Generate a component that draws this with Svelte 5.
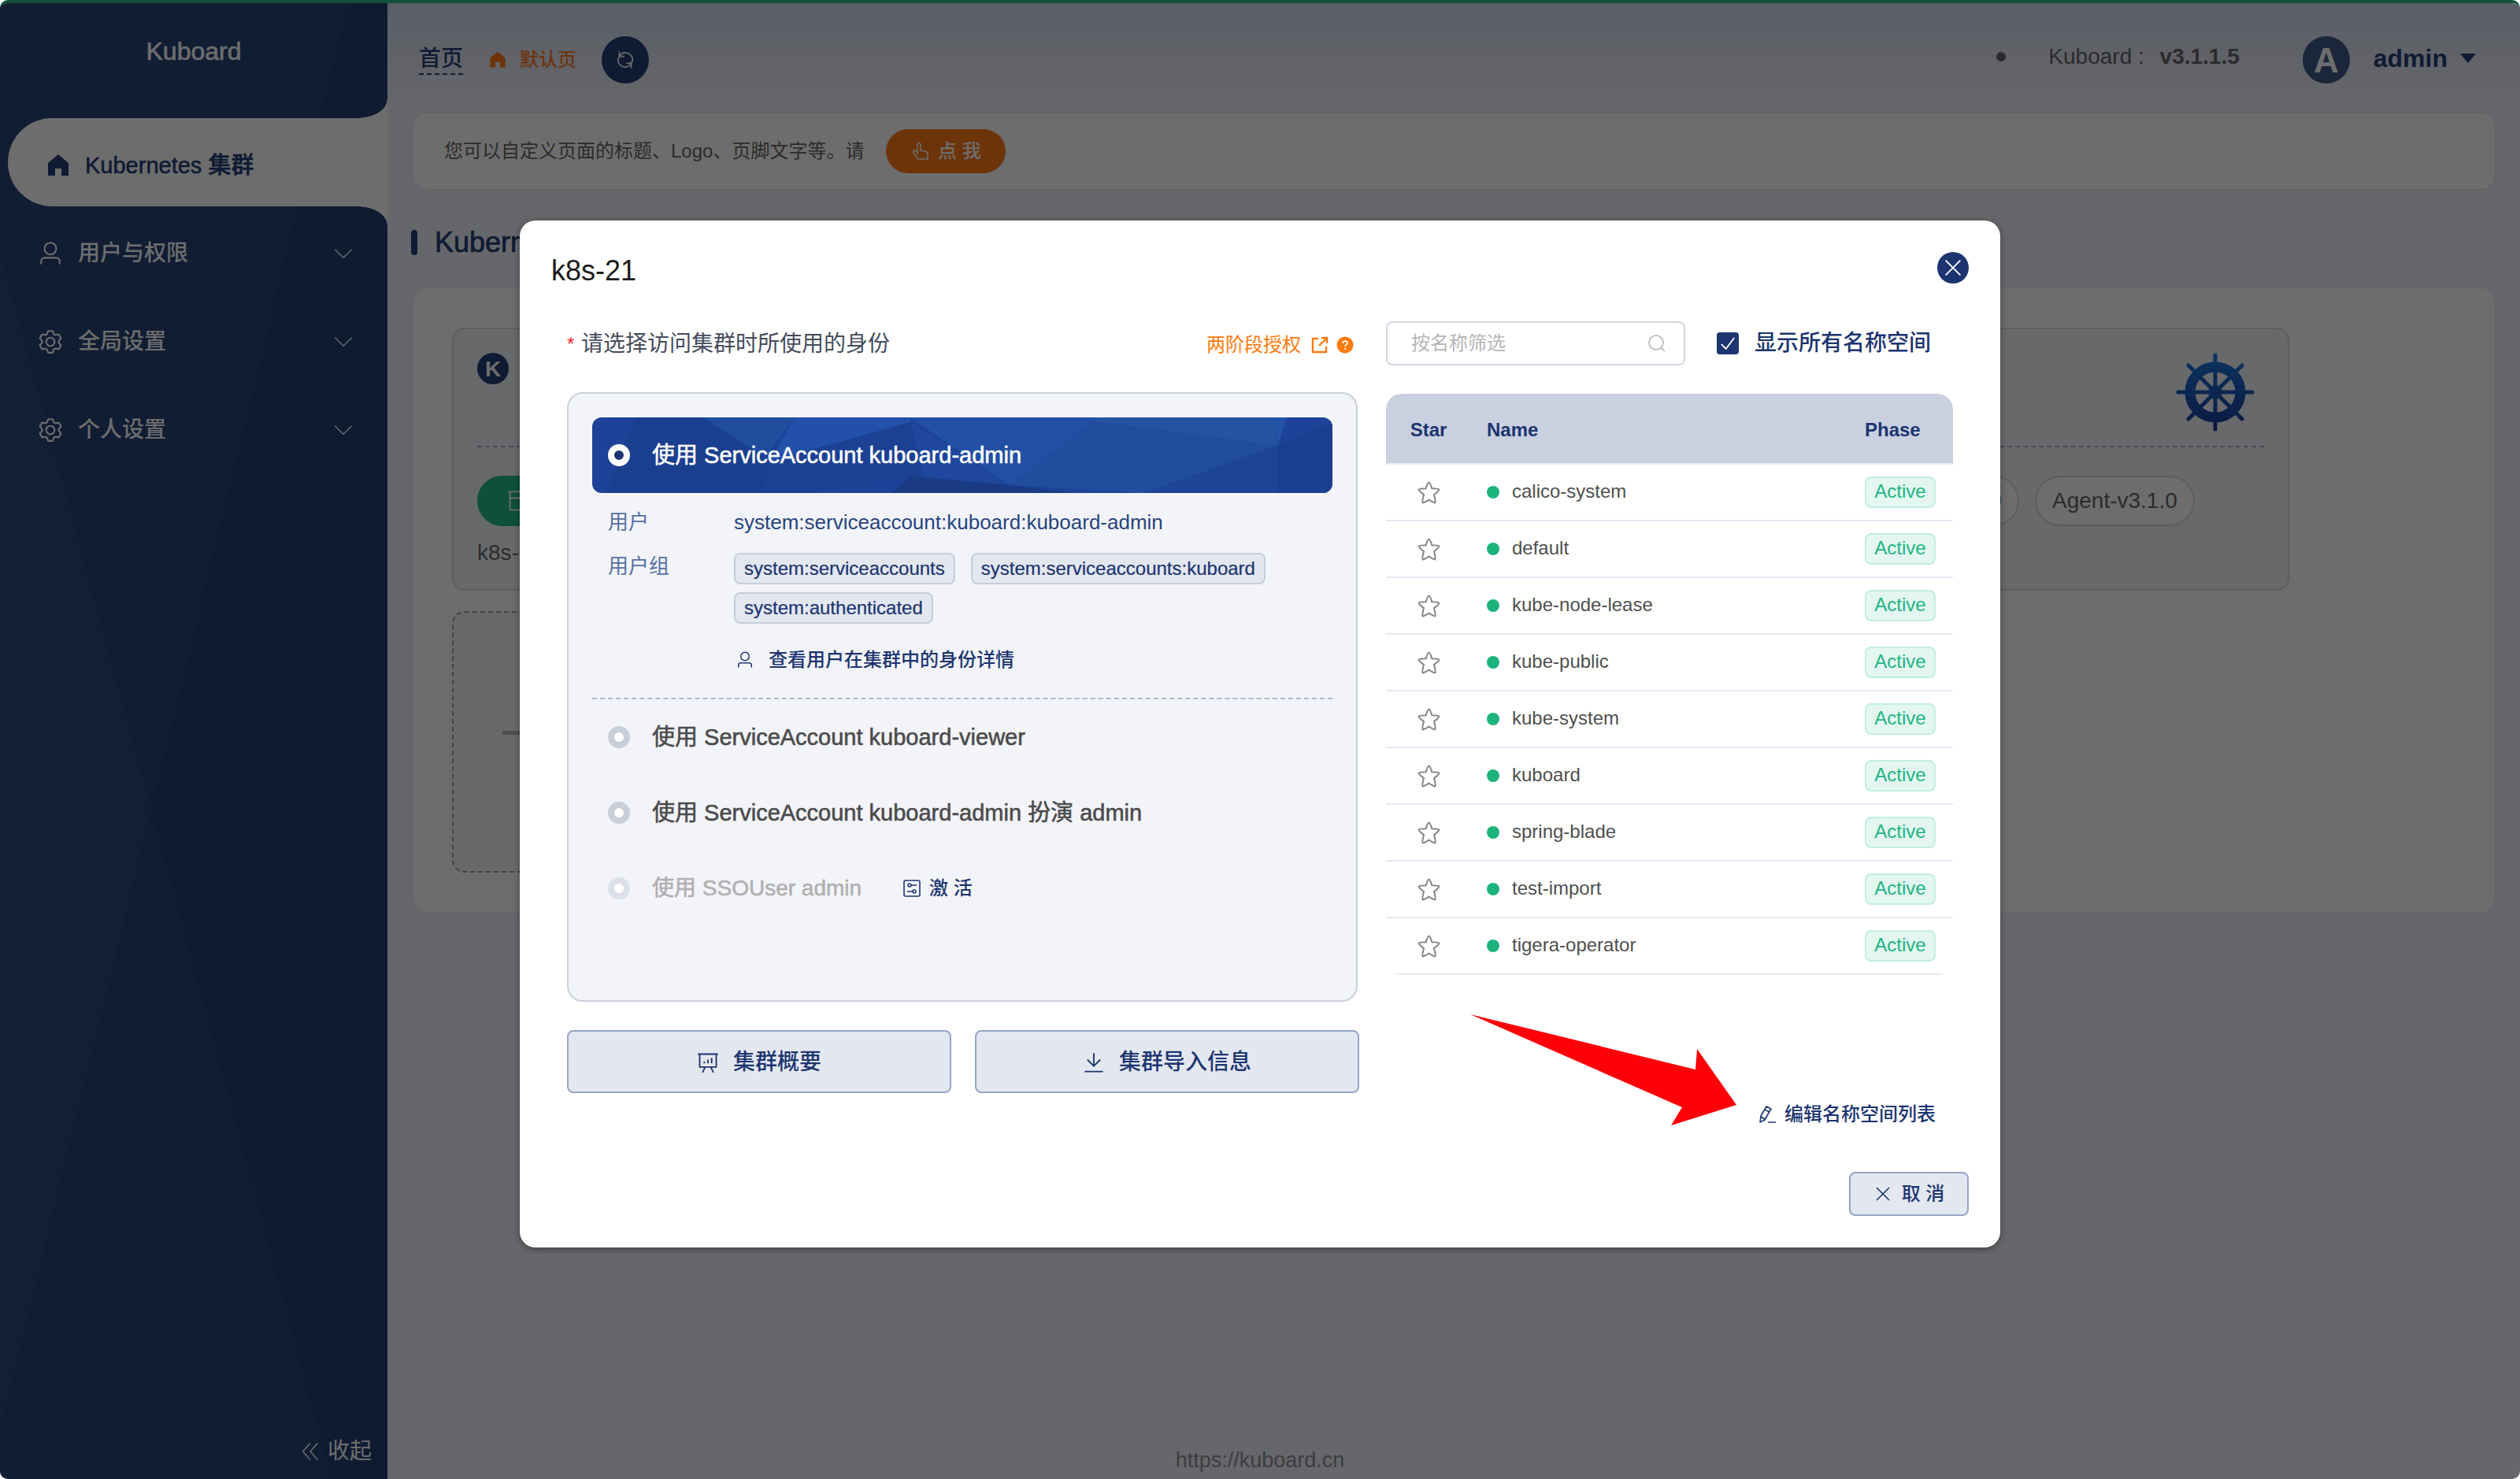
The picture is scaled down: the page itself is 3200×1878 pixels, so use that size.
<script lang="ts">
  const menu = [
    { label: '用户与权限', icon: 'user' },
    { label: '全局设置', icon: 'setting' },
    { label: '个人设置', icon: 'setting' }
  ];
  const groups = ['system:serviceaccounts', 'system:serviceaccounts:kuboard', 'system:authenticated'];
  const namespaces = [
    'calico-system', 'default', 'kube-node-lease', 'kube-public', 'kube-system',
    'kuboard', 'spring-blade', 'test-import', 'tigera-operator'
  ];
  const clusters = [
    { name: 'k8s-21', versions: [] },
    { name: '', versions: [] },
    { name: '', versions: ['1.21.0', 'Agent-v3.1.0'] }
  ];
  let identity = $state('admin');
  let showAll = $state(true);
  let filter = $state('');
  const shown = $derived(namespaces.filter((n) => n.includes(filter)));
</script>

{#snippet icon(name: string)}
  {#if name === 'user'}
    <svg class="icon" viewBox="0 0 1024 1024" aria-hidden="true"><path d="M512 512a192 192 0 1 0 0-384 192 192 0 0 0 0 384zm0 64a256 256 0 1 1 0-512 256 256 0 0 1 0 512zm320 320v-96a96 96 0 0 0-96-96H288a96 96 0 0 0-96 96v96a32 32 0 1 1-64 0v-96a160 160 0 0 1 160-160h448a160 160 0 0 1 160 160v96a32 32 0 1 1-64 0z" /></svg>
  {:else if name === 'setting'}
    <svg class="icon" viewBox="0 0 1024 1024" aria-hidden="true"><path d="M600.704 64a32 32 0 0 1 30.464 22.208l35.2 109.376c14.784 7.232 28.928 15.36 42.432 24.512l112.384-24.192a32 32 0 0 1 34.432 15.36L944.32 364.8a32 32 0 0 1-4.032 37.504l-77.12 85.12a357.12 357.12 0 0 1 0 49.024l77.12 85.248a32 32 0 0 1 4.032 37.504l-88.704 153.6a32 32 0 0 1-34.432 15.296L708.8 803.904c-13.44 9.088-27.648 17.28-42.368 24.512l-35.264 109.376A32 32 0 0 1 600.704 960H423.296a32 32 0 0 1-30.464-22.208L357.696 828.48a351.616 351.616 0 0 1-42.56-24.64l-112.32 24.256a32 32 0 0 1-34.432-15.36L79.68 659.2a32 32 0 0 1 4.032-37.504l77.12-85.248a357.12 357.12 0 0 1 0-48.896l-77.12-85.248A32 32 0 0 1 79.68 364.8l88.704-153.6a32 32 0 0 1 34.432-15.296l112.32 24.256c13.568-9.152 27.776-17.408 42.56-24.64l35.2-109.312A32 32 0 0 1 423.232 64H600.64zm-23.424 64H446.72l-36.352 113.088-24.512 11.968a294.113 294.113 0 0 0-34.816 20.096l-22.656 15.36-116.224-25.088-65.28 113.152 79.68 88.192-1.92 27.136a293.12 293.12 0 0 0 0 40.192l1.92 27.136-79.808 88.192 65.344 113.152 116.224-25.024 22.656 15.296a294.113 294.113 0 0 0 34.816 20.096l24.512 11.968L446.72 896h130.688l36.48-113.152 24.448-11.904a288.282 288.282 0 0 0 34.752-20.096l22.592-15.296 116.288 25.024 65.28-113.152-79.744-88.192 1.92-27.136a293.12 293.12 0 0 0 0-40.256l-1.92-27.136 79.808-88.128-65.344-113.152-116.288 24.96-22.592-15.232a287.616 287.616 0 0 0-34.752-20.096l-24.448-11.904L577.344 128zM512 320a192 192 0 1 1 0 384 192 192 0 0 1 0-384zm0 64a128 128 0 1 0 0 256 128 128 0 0 0 0-256z" /></svg>
  {:else if name === 'home'}
    <svg class="icon" viewBox="0 0 1024 1024" aria-hidden="true"><path d="M512 64 96 416v512h288V640h256v288h288V416z" /></svg>
  {:else if name === 'question'}
    <svg class="icon" viewBox="0 0 1024 1024" aria-hidden="true"><path d="M512 64a448 448 0 1 1 0 896 448 448 0 0 1 0-896z" /><path class="cut" d="M392 420c0-72 50-118 120-118s122 44 122 112c0 92-122 92-122 178" /><circle class="cut-dot" cx="512" cy="716" r="48" /></svg>
  {:else}
    <svg class="icon line" viewBox="0 0 24 24" aria-hidden="true">
      {#if name === 'down'}<path d="M4 8l8 8 8-8" />
      {:else if name === 'collapse'}<path d="M12 3L4 12l8 9M20 3l-8 9 8 9" />
      {:else if name === 'close'}<path d="M4 4l16 16M20 4L4 20" />
      {:else if name === 'check'}<path d="M5 13l5 5L19 6" />
      {:else if name === 'search'}<path d="M11 2a9 9 0 1 0 0 18 9 9 0 0 0 0-18zM18 18l4 4" />
      {:else if name === 'refresh'}<path d="M5 2v6h6M5 8c3-5 9-6 13-2 3 3 3 7 1 10M19 22v-6h-6M19 16c-3 5-9 6-13 2-3-3-3-7-1-10" />
      {:else if name === 'pointer'}<path d="M8 15V4a2 2 0 0 1 4 0v7l6 1q3 1 3 4v6H9l-6-8q-1-2 1-3t4 4z" />
      {:else if name === 'link'}<path d="M10 4H3v17h17v-7M14 3h7v7M21 3L11 13" />
      {:else if name === 'board'}<path d="M1 3h22M3 3v14h18V3M9 17l-3 6M15 17l3 6M8 13v-2M12 13V9M16 13V7" />
      {:else if name === 'download'}<path d="M12 2v14M5 9l7 7 7-7M2 22h20" />
      {:else if name === 'pen'}<path d="M11 2l6 3-8 14-6 3 1-8zM9 6l6 3M4 15l5 3M13 22h10" />
      {:else if name === 'operation'}<path d="M4 2h16a2 2 0 0 1 2 2v16a2 2 0 0 1-2 2H4a2 2 0 0 1-2-2V4a2 2 0 0 1 2-2zM11 8h7M6 16h7" /><circle cx="9" cy="8" r="2" /><circle cx="15" cy="16" r="2" />
      {:else if name === 'star'}<path d="M12 2q1 0 3 6q6 0 7 1q0 1-5 5q2 7 1 8q-1 0-6-3q-5 3-6 3q-1-1 1-8q-5-4-5-5q1-1 7-1q2-6 3-6z" />
      {:else if name === 'box'}<path d="M1 2h22M3 2v18q0 2 2 2h14q2 0 2-2V2M3 9h18" />
      {/if}
    </svg>
  {/if}
{/snippet}

<div class="page">
  <aside class="sidebar">
    <svg class="facets" viewBox="0 0 492 1878" preserveAspectRatio="none" aria-hidden="true">
      <polygon class="f-left" points="0,316 192,1026 0,1815" />
      <polygon class="f-right" points="441,0 492,0 492,1878 421,1878 192,1026" />
    </svg>
    <div class="brand">Kuboard</div>
    <nav class="menu">
      <a class="item active" href="#clusters"><span class="mi">{@render icon('home')}</span><span>Kubernetes 集群</span></a>
      {#each menu as m}
        <button class="item"><span class="mi">{@render icon(m.icon)}</span><span>{m.label}</span><span class="chev">{@render icon('down')}</span></button>
      {/each}
    </nav>
    <button class="collapse">{@render icon('collapse')}<span>收起</span></button>
  </aside>

  <main class="main">
    <header class="header">
      <a class="crumb" href="#home">首页</a>
      <a class="default" href="#default">{@render icon('home')}<span>默认页</span></a>
      <button class="refresh" aria-label="刷新">{@render icon('refresh')}</button>
      <span class="status"></span>
      <span class="version">Kuboard : <b>v3.1.1.5</b></span>
      <span class="avatar">A</span>
      <button class="account">admin<span class="caret"></span></button>
    </header>

    <section class="banner">
      <span>您可以自定义页面的标题、Logo、页脚文字等。请</span>
      <button class="try">{@render icon('pointer')}<span>点 我</span></button>
    </section>

    <h1 class="heading">Kubernetes 集群</h1>

    <section class="panel">
      {#each clusters as c}
        <article class="card">
          <div class="card-top">
            <span class="k">K</span>
            <svg class="helm" viewBox="0 0 100 100" aria-hidden="true">
              <defs><linearGradient id="hg" gradientUnits="userSpaceOnUse" x1="0" y1="0" x2="0" y2="100"><stop offset="0" stop-color="#1a7ce1" /><stop offset="1" stop-color="#1a3a9a" /></linearGradient></defs>
              <g fill="none" stroke="url(#hg)" stroke-linecap="round">
                <circle cx="50" cy="50" r="32" stroke-width="13" />
                <path stroke-width="5" d="M50 3V97M3 49.99L97 50M16 16L84 84M84 16L16 84" />
              </g>
              <circle cx="50" cy="50" r="9" fill="url(#hg)" />
            </svg>
          </div>
          <div class="pills">
            <div class="pair">
              <span class="pill ready">{@render icon('box')}</span>
              {#if c.versions.length}<span class="pill">{c.versions[0]}</span>{/if}
            </div>
            {#if c.versions.length}<span class="pill">{c.versions[1]}</span>{/if}
          </div>
          <div class="card-name">{c.name}</div>
        </article>
      {/each}
      <button class="add" aria-label="添加集群"><span class="bar"></span></button>
    </section>

    <footer class="footer"><a href="#kuboard">https://kuboard.cn</a></footer>
  </main>

  <div class="mask">
    <div class="modal" role="dialog" aria-modal="true" aria-labelledby="dlg-title">
      <div class="modal-head">
        <h2 id="dlg-title">k8s-21</h2>
        <button class="x" aria-label="关闭">{@render icon('close')}</button>
      </div>

      <div class="cols">
        <section class="left">
          <div class="bar-row">
            <span class="req">*</span><span class="question">请选择访问集群时所使用的身份</span>
            <a class="auth" href="#auth">两阶段授权{@render icon('link')}{@render icon('question')}</a>
          </div>

          <div class="ids">
            <label class="opt top">
              <svg class="poly" viewBox="0 0 940 96" preserveAspectRatio="none" aria-hidden="true">
                <polygon fill="#214d9e" points="140,0 257,0 220,50" />
                <polygon fill="#2350a8" points="257,0 403,0 405,6 225,56" />
                <polygon fill="#1b3f8f" points="55,0 140,0 225,56 215,96 18,96" />
                <polygon fill="#1c4194" points="225,56 405,6 420,75 270,96 215,96" />
                <polygon fill="#2250a4" points="403,0 640,0 636,5 530,86" />
                <polygon fill="#1e479d" points="405,6 530,86 420,75" />
                <polygon fill="#24549f" points="640,0 865,0 870,36 636,5" />
                <polygon fill="#214d9f" points="636,5 870,36 700,96 530,86" />
                <polygon fill="#1d4496" points="870,36 870,96 702,96" />
                <polygon fill="#1a3b84" points="405,75 530,86 610,96 380,96" />
                <polygon fill="#1b3f90" points="870,36 940,8 940,96 870,96" />
                <polygon fill="#2353a6" points="865,0 882,0 871,36" />
              </svg>
              <input type="radio" name="identity" value="admin" bind:group={identity} />
              <span>使用 ServiceAccount kuboard-admin</span>
            </label>
            <dl class="detail">
              <dt>用户</dt><dd>system:serviceaccount:kuboard:kuboard-admin</dd>
              <dt>用户组</dt>
              <dd class="tags">{#each groups as g}<span class="tag">{g}</span>{/each}</dd>
              <dt></dt>
              <dd><button class="text-btn view">{@render icon('user')}<span>查看用户在集群中的身份详情</span></button></dd>
            </dl>
            <label class="opt"><input type="radio" name="identity" value="viewer" bind:group={identity} /><span>使用 ServiceAccount kuboard-viewer</span></label>
            <label class="opt"><input type="radio" name="identity" value="act" bind:group={identity} /><span>使用 ServiceAccount kuboard-admin 扮演 admin</span></label>
            <div class="opt-row">
              <label class="opt off"><input type="radio" name="identity" value="sso" disabled /><span>使用 SSOUser admin</span></label>
              <button class="text-btn">{@render icon('operation')}<span>激 活</span></button>
            </div>
          </div>

          <div class="actions">
            <button class="btn">{@render icon('board')}<span>集群概要</span></button>
            <button class="btn">{@render icon('download')}<span>集群导入信息</span></button>
          </div>
        </section>

        <section class="right">
          <div class="bar-row">
            <div class="search"><input type="text" placeholder="按名称筛选" aria-label="按名称筛选" bind:value={filter} />{@render icon('search')}</div>
            <label class="all"><span class="box"><input type="checkbox" bind:checked={showAll} />{@render icon('check')}</span>显示所有名称空间</label>
          </div>
          <div class="table-wrap">
            <table>
              <thead><tr><th class="c-star">Star</th><th>Name</th><th class="c-phase">Phase</th></tr></thead>
              <tbody>
                {#each shown as n}
                  <tr>
                    <td class="c-star"><button class="star" aria-label="收藏 {n}">{@render icon('star')}</button></td>
                    <td><span class="name"><i class="dot"></i><span>{n}</span></span></td>
                    <td><span class="active-tag">Active</span></td>
                  </tr>
                {/each}
              </tbody>
            </table>
          </div>
          <button class="text-btn edit">{@render icon('pen')}<span>编辑名称空间列表</span></button>
        </section>
      </div>

      <div class="modal-foot"><button class="btn cancel">{@render icon('close')}<span>取 消</span></button></div>

      <svg class="arrow" viewBox="0 0 339 142" aria-hidden="true"><polygon points="0,0 286,70 288,44 338,115 255,141 269,118" /></svg>
    </div>
  </div>
</div>

<style>
  :global(body) { margin: 0; background: #fff; }
  .page {
    --navy: #1c3570;
    position: relative;
    display: flex;
    min-height: 100vh;
    overflow: hidden;
    box-sizing: border-box;
    border-top: 4px solid #11513b;
    border-radius: 10px;
    background: #eff1f9;
    color: #656565;
    font-family: "Liberation Sans", "Noto Sans CJK SC", sans-serif;
    font-size: 28px;
    line-height: 40px;
  }
  .page :global(*) { box-sizing: border-box; }
  button { font: inherit; color: inherit; background: none; border: 0; padding: 0; margin: 0; cursor: pointer; }
  a { color: inherit; text-decoration: none; }
  .icon { width: 1em; height: 1em; flex: none; fill: currentColor; display: block; }
  .icon.line { fill: none; stroke: currentColor; stroke-width: 1.6; stroke-linejoin: round; }

  .sidebar { position: relative; width: 492px; flex: none; display: flex; flex-direction: column; background: #284477; color: #fff; }
  .facets { position: absolute; inset: 0; width: 100%; height: 100%; }
  .f-left { fill: #30467b; }
  .f-right { fill: #254074; }
  .brand { position: relative; height: 146px; padding-top: 41px; text-align: center; font-size: 32px; -webkit-text-stroke: 0.02em currentColor; }
  .menu { position: relative; display: flex; flex-direction: column; }
  .item { display: flex; align-items: center; height: 112px; padding: 8px 40px 0 47px; text-align: left; font-weight: 500; }
  .mi { width: 34px; margin-right: 18px; font-size: 34px; }
  .chev { margin-left: auto; font-size: 32px; }
  .chev .icon.line { stroke-width: 1; }
  .active { position: relative; margin-left: 10px; padding-left: 48px; border-radius: 56px 0 0 56px; background: #fff; color: #233f77; -webkit-text-stroke: 0.02em currentColor; }
  .active span:last-child { font-size: 29px; }
  .active .mi { width: 32px; font-size: 32px; }
  .active::before, .active::after { content: ""; position: absolute; right: 0; width: 38px; height: 24px; }
  .active::before { bottom: 100%; background: radial-gradient(ellipse 38px 24px at 0 0, transparent 98%, #fff 100%); }
  .active::after { top: 100%; background: radial-gradient(ellipse 38px 24px at 0 100%, transparent 98%, #fff 100%); }
  .collapse { position: relative; display: flex; align-items: center; gap: 8px; margin: auto 20px 15px auto; }
  .collapse .icon.line { font-size: 28px; stroke-width: 1.3; }

  .main { flex: 1; min-width: 0; display: flex; flex-direction: column; padding: 0 30px; background: linear-gradient(#d3dbed, #eff1f9 136px); }
  .header { display: flex; align-items: center; height: 138px; padding: 6px 26px 0 10px; color: #233f77; }
  .crumb { line-height: 36px; border-bottom: 2px dashed; font-weight: 500; }
  .default { display: flex; align-items: center; gap: 16px; margin-left: 32px; font-size: 24px; font-weight: 500; color: #ff7a18; }
  .refresh { display: grid; place-items: center; width: 60px; height: 60px; margin-left: 32px; border-radius: 50%; background: #233f77; color: #fff; }
  .refresh .icon { font-size: 26px; }
  .status { width: 12px; height: 12px; margin: 0 0 8px auto; border-radius: 50%; background: #656565; }
  .version { margin-left: 54px; padding-bottom: 8px; color: #656565; }
  .version b { margin-left: 12px; }
  .avatar { width: 60px; height: 60px; margin-left: 80px; border-radius: 50%; background: #3f5988; color: #fff; font-size: 44px; font-weight: 700; line-height: 62px; text-align: center; }
  .account { display: flex; align-items: center; gap: 16px; margin-left: 30px; padding-bottom: 4px; font-size: 32px; font-weight: 700; }
  .caret { border: 10px solid transparent; border-top: 12px solid; border-bottom: 0; }

  .banner { display: flex; align-items: center; gap: 28px; height: 100px; padding: 0 40px; border: 2px solid #e8ebf6; border-radius: 20px; background: #fff; font-size: 24px; }
  .try { display: flex; align-items: center; justify-content: center; gap: 10px; width: 152px; height: 56px; border-radius: 28px; background: #ff7a18; color: #fff; font-weight: 500; }
  .heading { display: flex; align-items: center; gap: 22px; height: 48px; margin: 42px 0 32px; font-size: 36px; font-weight: 400; color: #233f77; -webkit-text-stroke: 0.02em currentColor; }
  .heading::before { content: ""; width: 8px; height: 32px; border-radius: 4px; background: #233f77; }
  .panel { display: grid; grid-template-columns: repeat(3, 759px); gap: 26px 28px; padding: 50px; border: 2px solid #e8ebf6; border-radius: 20px; background: #fff; }
  .card { height: 334px; padding: 30px; border: 2px solid #d7dae1; border-radius: 16px; background: #f4f6fb; }
  .card-top { display: flex; justify-content: space-between; height: 120px; border-bottom: 2px dashed #a2a9d3; }
  .k { width: 40px; height: 40px; border-radius: 50%; background: #233f77; color: #fff; font-weight: 700; line-height: 42px; text-align: center; }
  .helm { width: 100px; height: 100px; margin-right: 12px; }
  .pills { display: flex; gap: 20px; margin: 36px 0 14px; }
  .pair { display: flex; gap: 20px; width: 384px; }
  .pill { display: flex; align-items: center; height: 64px; padding: 0 20px; border: 2px solid #d7dae1; border-radius: 32px; background: #fff; }
  .ready { flex: 1; padding: 0 36px; border-color: #23bb83; background: #23bb83; color: #fff; }
  .add { display: flex; align-items: center; height: 332px; padding: 0 62px 24px; border: 2px dashed #969ba4; border-radius: 16px; background: #f4f6fb; }
  .bar { flex: 1; height: 5px; border-radius: 2px; background: #b6b6b6; }
  .footer { margin-top: auto; padding-bottom: 4px; padding-right: 492px; text-align: center; color: #8d8f96; font-size: 27px; }

  .mask { position: absolute; inset: 0; padding-top: 276px; background: rgba(0, 0, 0, 0.573); }
  .modal { position: relative; width: min(1880px, 100% - 80px); margin: 0 auto; padding: 40px; border-radius: 20px; background: #fff; box-shadow: 0 2px 8px rgba(0, 0, 0, 0.4); color: #4f4f4f; }
  .modal-head { display: flex; justify-content: space-between; margin-bottom: 40px; }
  h2 { margin: 0; font-size: 36px; line-height: 48px; font-weight: 400; color: #1a1a1a; }
  .x { display: grid; place-items: center; width: 40px; height: 40px; border-radius: 50%; background: var(--navy); color: #fff; }
  .x .icon { font-size: 28px; }
  .cols { display: grid; grid-template-columns: 1fr 720px; gap: 34px; padding: 0 20px; }
  .left, .right { display: flex; flex-direction: column; min-width: 0; }
  .bar-row { display: flex; align-items: center; height: 56px; }
  .left .bar-row { padding: 2px 6px 0 0; margin-bottom: 34px; }
  .right .bar-row { margin-bottom: 36px; }
  .req { width: 18px; color: #f5222d; font-size: 24px; }
  .question { color: #454c5c; }
  .auth { display: flex; align-items: center; gap: 8px; margin-left: auto; padding-top: 2px; font-size: 24px; color: #ff7a0d; }
  .auth .icon.line { margin-left: 4px; stroke-width: 2.4; stroke-linejoin: miter; }
  .cut { fill: none; stroke: #fff; stroke-width: 74; }
  .cut-dot { fill: #fff; }

  .ids { height: 774px; margin-right: 2px; padding: 30px; border: 2px solid #c9d0dc; border-radius: 20px; background: #f3f4f9; }
  .opt { position: relative; display: flex; align-items: center; gap: 28px; height: 96px; padding-left: 20px; font-size: 29px; color: #4b4b4b; -webkit-text-stroke: 0.02em currentColor; }
  .opt span { position: relative; }
  .opt input { position: relative; appearance: none; flex: none; width: 28px; height: 28px; margin: 0; border: 8px solid #c8cfdb; border-radius: 50%; background: #fff; }
  .top { overflow: hidden; border-radius: 12px; background: #1d4297; color: #fff; }
  .poly { position: absolute; inset: 0; width: 100%; height: 100%; }
  .opt.top input { border-color: #fff; background: var(--navy); }
  .off { font-size: 28px; color: #b0b0b0; }
  .opt.off input { border-color: #dde0ea; }
  .opt-row { display: flex; align-items: center; gap: 52px; }
  .detail { display: grid; grid-template-columns: 160px 1fr; margin: 0; padding: 17px 0 32px 20px; border-bottom: 2px dashed #aebbd6; font-size: 26px; color: #27447f; }
  dt { color: #5470a3; }
  dt, dd { margin: 0; }
  dd { min-height: 40px; }
  .detail dt:nth-of-type(2) { padding-top: 16px; }
  .tags { display: flex; flex-wrap: wrap; gap: 10px 20px; padding-top: 19px; }
  .tag { height: 40px; padding: 0 11px; border: 2px solid #c5cede; border-radius: 8px; background: #e3e7f0; color: var(--navy); font-size: 24px; line-height: 36px; -webkit-text-stroke: 0.01em currentColor; }
  .text-btn { display: flex; align-items: center; gap: 10px; font-size: 24px; line-height: 32px; font-weight: 500; color: var(--navy); }
  .view { margin-top: 30px; gap: 18px; padding-left: 2px; }
  .actions { display: grid; grid-template-columns: 1fr 1fr; gap: 30px; margin-top: 36px; }
  .btn { display: flex; align-items: center; justify-content: center; gap: 18px; height: 80px; padding-top: 2px; border: 2px solid #96a5c5; border-radius: 8px; background: #e3e7f0; color: var(--navy); font-weight: 500; }

  .search { position: relative; width: 380px; }
  .search input { width: 100%; height: 56px; padding: 0 60px 0 30px; border: 2px solid #d4d6e2; border-radius: 8px; outline: 0; font: inherit; font-size: 24px; color: #4f4f4f; }
  .search input::placeholder { color: #b5b5b5; opacity: 1; }
  .search .icon { position: absolute; top: 16px; right: 24px; font-size: 24px; color: #b5b5b5; }
  .all { display: flex; align-items: center; gap: 20px; margin-left: 40px; color: var(--navy); font-weight: 500; }
  .box { position: relative; width: 28px; height: 28px; }
  .box input { appearance: none; display: block; width: 28px; height: 28px; margin: 0; border: 2px solid var(--navy); border-radius: 4px; }
  .box input:checked { background: var(--navy); }
  .box .icon { position: absolute; inset: 0; font-size: 28px; color: #fff; pointer-events: none; }
  .table-wrap { overflow: hidden; border-radius: 20px; }
  table { width: 100%; border-spacing: 0; table-layout: fixed; font-size: 24px; }
  th, td { height: 72px; padding: 0 0 0 20px; border-bottom: 2px solid #e6e9f4; text-align: left; }
  th { height: 90px; padding-top: 3px; background: #c9d0e0; color: var(--navy); font-weight: 700; }
  .c-star { width: 108px; padding-left: 0; text-align: center; }
  .c-phase { width: 132px; }
  .star { display: block; margin: 0 auto; font-size: 31px; color: #84868c; }
  .name { display: flex; align-items: center; gap: 16px; }
  .name span { padding-bottom: 3px; }
  .dot { width: 16px; height: 16px; border-radius: 50%; background: #1cb47c; }
  .active-tag { display: block; width: 90px; height: 40px; border: 2px solid #c3eee0; border-radius: 8px; background: #e3f7f0; color: #1fb583; line-height: 34px; text-align: center; }
  .edit { margin: 161px 22px 0 auto; }
  .modal-foot { display: flex; justify-content: flex-end; margin-top: 57px; }
  .cancel { gap: 12px; width: 152px; height: 56px; padding: 0; font-size: 24px; }
  .arrow { position: absolute; left: 1207px; top: 1008px; width: 339px; height: 142px; fill: #fe0008; }
</style>
